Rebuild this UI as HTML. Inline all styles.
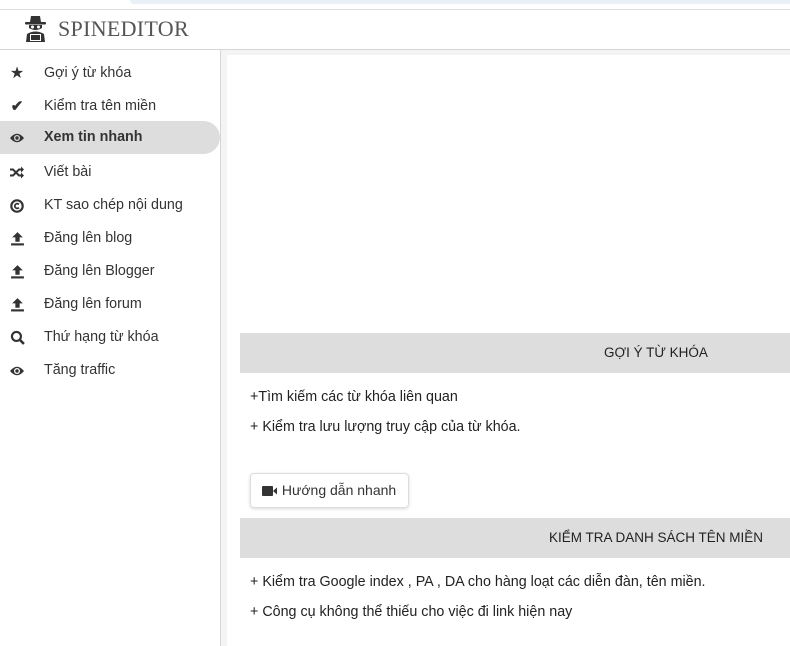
<!DOCTYPE html>
<html><head><meta charset="utf-8"><style>
*{margin:0;padding:0;box-sizing:border-box}
body{width:790px;height:646px;overflow:hidden;background:#fff;font-family:"Liberation Sans",sans-serif;color:#333;position:relative}
.abs{position:absolute}
.nav{position:absolute;left:0;width:220px;height:33px;font-size:14.3px;color:#333;line-height:33px}
.nav .ic{position:absolute;left:9px;top:0;width:16px;height:33px;display:flex;align-items:center;justify-content:center}
.nav .t{position:absolute;left:44px}
.nav.act{background:#ddd;border-radius:0 17px 17px 0;font-weight:bold}
.bar{position:absolute;left:240px;width:550px;height:40px;background:#ddd;font-size:13.5px;color:#222;line-height:40px}
.p{position:absolute;left:250px;font-size:14.3px;color:#222}
</style></head><body>
<div class="abs" style="left:130px;top:0;width:660px;height:4px;background:#e9f0f8;border-radius:0 0 0 6px"></div>
<div class="abs" style="left:0;top:9px;width:790px;height:1px;background:#ddd"></div>
<div class="abs" style="left:0;top:49px;width:790px;height:1px;background:#d6d6d6"></div>
<div class="abs" style="left:0;top:50px;width:790px;height:5px;background:#f4f4f4"></div>
<div class="abs" style="left:220px;top:50px;width:1px;height:596px;background:#d6d6d6"></div>
<div class="abs" style="left:221px;top:50px;width:6px;height:596px;background:#f4f4f4"></div>
<div class="abs" style="left:0;top:50px;width:220px;height:596px;background:#fff"></div>
<div class="abs" style="left:227px;top:55px;width:563px;height:591px;background:#fff"></div>
<svg class="abs" style="left:23px;top:14px" width="25" height="28" viewBox="0 0 25 28">
<path d="M8 2 L17 2 L18 8 L7 8 Z" fill="#333"/><rect x="2" y="8" width="21" height="2.5" rx="1" fill="#333"/>
<path d="M6 11 h13 v3 q-6.5 4 -13 0z" fill="#333"/>
<circle cx="9.5" cy="13" r="1.5" fill="#fff"/><circle cx="15.5" cy="13" r="1.5" fill="#fff"/>
<path d="M3 28 L4 20 Q12.5 15 21 20 L22 28 Z" fill="#333"/>
<rect x="7" y="20" width="11" height="7" fill="#fff"/><rect x="8" y="21" width="9" height="5" fill="#333"/>
</svg>
<div class="abs" style="left:58px;top:16px;font-family:'Liberation Serif',serif;font-size:22px;color:#555;letter-spacing:0.3px">SPINEDITOR</div>

<div class="nav" style="top:57px"><span class="ic" style="font-size:16px">★</span><span class="t">Gợi ý từ khóa</span></div>
<div class="nav" style="top:90px"><span class="ic" style="font-weight:bold;font-size:15px">✔</span><span class="t">Kiểm tra tên miền</span></div>
<div class="nav act" style="top:121px;height:33px"><span class="ic"><svg width="17" height="12" viewBox="0 0 16 11"><path d="M1 5.5 Q8 -3 15 5.5 Q8 14 1 5.5Z" fill="#333"/><circle cx="8" cy="5.5" r="3" fill="#ddd"/><circle cx="8" cy="5.5" r="1.7" fill="#333"/></svg></span><span class="t">Xem tin nhanh</span></div>
<div class="nav" style="top:156px"><span class="ic"><svg width="17" height="13" viewBox="0 0 16 12"><path d="M1 3h3l6 6h3M1 9h3l6-6h3" stroke="#333" stroke-width="2" fill="none"/><path d="M12 0l3 3-3 3zM12 6l3 3-3 3z" fill="#333"/></svg></span><span class="t">Viết bài</span></div>
<div class="nav" style="top:189px"><span class="ic"><svg width="14" height="14" viewBox="0 0 13 13"><circle cx="6.5" cy="6.5" r="5.3" stroke="#333" stroke-width="2" fill="none"/><path d="M8.3 5 A2.2 2.2 0 1 0 8.3 8" stroke="#333" stroke-width="1.6" fill="none"/></svg></span><span class="t">KT sao chép nội dung</span></div>
<div class="nav" style="top:222px"><span class="ic"><svg width="15" height="15" viewBox="0 0 14 14"><path d="M7 1 L12 6 H9 V10 H5 V6 H2Z" fill="#333"/><rect x="1" y="11.5" width="12" height="2" fill="#333"/></svg></span><span class="t">Đăng lên blog</span></div>
<div class="nav" style="top:255px"><span class="ic"><svg width="15" height="15" viewBox="0 0 14 14"><path d="M7 1 L12 6 H9 V10 H5 V6 H2Z" fill="#333"/><rect x="1" y="11.5" width="12" height="2" fill="#333"/></svg></span><span class="t">Đăng lên Blogger</span></div>
<div class="nav" style="top:288px"><span class="ic"><svg width="15" height="15" viewBox="0 0 14 14"><path d="M7 1 L12 6 H9 V10 H5 V6 H2Z" fill="#333"/><rect x="1" y="11.5" width="12" height="2" fill="#333"/></svg></span><span class="t">Đăng lên forum</span></div>
<div class="nav" style="top:321px"><span class="ic"><svg width="15" height="15" viewBox="0 0 14 14"><circle cx="6" cy="6" r="4.2" stroke="#333" stroke-width="2" fill="none"/><path d="M9 9l4 4" stroke="#333" stroke-width="2.4"/></svg></span><span class="t">Thứ hạng từ khóa</span></div>
<div class="nav" style="top:354px"><span class="ic"><svg width="17" height="12" viewBox="0 0 16 11"><path d="M1 5.5 Q8 -3 15 5.5 Q8 14 1 5.5Z" fill="#333"/><circle cx="8" cy="5.5" r="3" fill="#fff"/><circle cx="8" cy="5.5" r="1.7" fill="#333"/></svg></span><span class="t">Tăng traffic</span></div>

<div class="bar" style="top:333px"><span style="position:absolute;left:364px">GỢI Ý TỪ KHÓA</span></div>
<div class="p" style="top:389px">+Tìm kiếm các từ khóa liên quan</div>
<div class="p" style="top:419px">+ Kiểm tra lưu lượng truy cập của từ khóa.</div>
<div class="abs" style="left:250px;top:473px;width:159px;height:35px;border:1px solid #ddd;border-radius:4px;box-shadow:0 1px 3px rgba(0,0,0,.15);font-size:14px;color:#333;line-height:33px;padding-left:11px">
<svg width="16" height="10" viewBox="0 0 16 10" style="vertical-align:-1px"><rect x="0" y="0" width="11" height="10" rx="1" fill="#333"/><path d="M11 5 L15 1.5 V8.5Z" fill="#333"/></svg> Hướng dẫn nhanh</div>
<div class="bar" style="top:518px"><span style="position:absolute;left:309px">KIỂM TRA DANH SÁCH TÊN MIỀN</span></div>
<div class="p" style="top:574px">+ Kiểm tra Google index , PA , DA cho hàng loạt các diễn đàn, tên miền.</div>
<div class="p" style="top:604px">+ Công cụ không thể thiếu cho việc đi link hiện nay</div>
</body></html>
